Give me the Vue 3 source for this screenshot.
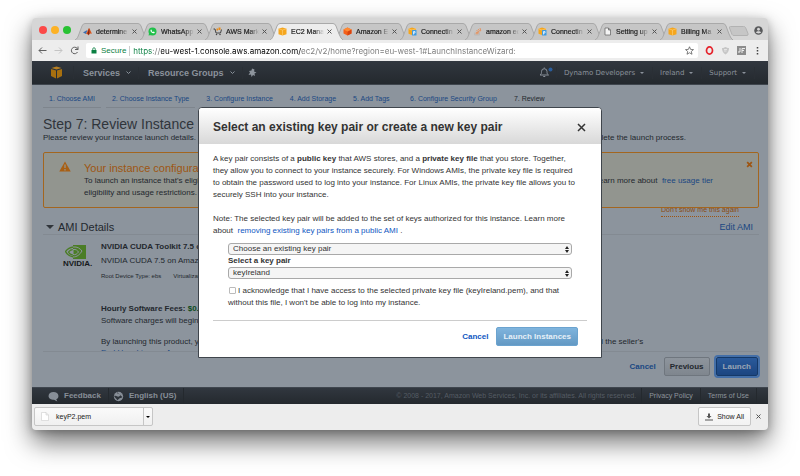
<template>
  <div class="desktop">
    <svg class="sprite" aria-hidden="true">
      <symbol id="i-matlab" viewBox="0 0 18 18">
        <path d="M0 11 5 8l4-2-3 8z" fill="#3c6fb0" />
        <path d="M6 14 12 2c2 2 4 8 6 12-4-2-5 0-7 3-1-3-3-3-5-3z" fill="#d9541a" />
        <path d="M12 2c-1 5-2 9-3 11l3 3c1-4 1-9 0-14z" fill="#7d1f12" />
      </symbol>
      <symbol id="i-whatsapp" viewBox="0 0 18 18">
        <circle cx="9" cy="9" r="8" fill="#20c04a" />
        <path d="m1 17 1.500-5 4 4z" fill="#20c04a" />
        <path d="M5 6c1-2 2-1 3 1L7 8c1 1 2 2 3 2l1-1c2 1 3 1 2 3-3 2-9-2-8-6z" fill="#fff" />
      </symbol>
      <symbol id="i-cart" viewBox="0 0 18 18">
        <path d="M1 4h3l2 8h9l2-7" fill="none" stroke="#444" stroke-width="2" />
        <path d="M7 3h3v4H7zM11 1h4v5h-4z" fill="#e88b1a" />
        <circle cx="7" cy="15" r="1.500" fill="#444" />
        <circle cx="14" cy="15" r="1.500" fill="#444" />
      </symbol>
      <symbol id="i-cube" viewBox="0 0 18 18">
        <path d="m9 1 8 2.500v11L9 17l-8-2.500v-11z" fill="#f5a61d" />
        <path d="m1 3.500 8 2.500 8-2.500M9 6v11" fill="none" stroke="#ffd27d" stroke-width="1.200" />
      </symbol>
      <symbol id="i-cube-red" viewBox="0 0 18 18">
        <path d="m9 1 8 4v8l-8 4-8-4V5z" fill="#f4601a" />
        <path d="m9 9 8-4v8l-8 4z" fill="#d9430c" />
        <path d="m9 1 8 4-8 4-8-4z" fill="#ff8a33" />
      </symbol>
      <symbol id="i-cube-doc" viewBox="0 0 18 18">
        <path d="m8 1 8 2.500v10L8 16l-7-2.500v-10z" fill="#f5a61d" />
        <path d="m1 3.500 7 2.500 8-2.500" fill="none" stroke="#ffd27d" stroke-width="1.200" />
        <rect x="8" y="6" width="9" height="11" rx="1" fill="#3f9be0" />
        <path d="M11 15V9h3v3h-3" fill="none" stroke="#fff" stroke-width="1.500" />
      </symbol>
      <symbol id="i-stack" viewBox="0 0 18 18">
        <path d="M3 11v5h10v-5" fill="none" stroke="#b5b5b5" stroke-width="1.500" />
        <path d="M5 13.500h6M5.500 10.500l6 1M7 7l5.500 3M10 4l4 5M14 2l1.500 6" stroke="#ee8748" stroke-width="1.600" />
      </symbol>
      <symbol id="i-file" viewBox="0 0 18 18">
        <path d="M4 2h7l4 4v10H4zM11 2v4h4" fill="#f4f4f4" stroke="#666" stroke-width="1.500" />
      </symbol>
    </svg>

    <div class="window">
      <div class="tab-strip">
        <div class="lights">
          <button class="light red" aria-label="Close window"></button>
          <button class="light amber" aria-label="Minimize window"></button>
          <button class="light green" aria-label="Zoom window"></button>
        </div>
        <div class="tabs">
          <div v-for="tab in tabs" :key="tab.id" :class="['tab', { active: tab.active }]">
            <svg class="tab-shape" viewBox="0 0 73 17" preserveAspectRatio="none">
              <path d="M0 17C2 16 3 14 4 11L7 3Q8 .5 10 .5H63Q65 .5 66 3L69 11Q71 16 73 17" />
            </svg>
            <svg class="tab-icon"><use :href="`#i-${tab.icon}`" /></svg>
            <span class="tab-title">{{ tab.title }}</span>
            <button class="tab-close" aria-label="Close tab">
              <svg viewBox="0 0 10 10"><path d="m1 1 8 8M9 1 1 9" /></svg>
            </button>
          </div>
        </div>
        <button class="new-tab" aria-label="New tab">
          <svg viewBox="0 0 20 10"><path d="M1.500.5h13q1.500 0 2 1l2.500 6q.5 2-1 2H5q-1.500 0-2-1L.5 2Q0 .5 1.500.5z" /></svg>
        </button>
        <button class="profile" aria-label="Profile">
          <svg viewBox="0 0 18 18">
            <circle cx="9" cy="9" r="8.500" fill="#58595b" />
            <circle cx="9" cy="6.500" r="2.800" fill="#d6d6d6" />
            <path d="M3.500 12.500c2-3 9-3 11 0-2 3-9 3-11 0z" fill="#d6d6d6" />
          </svg>
        </button>
      </div>

      <div class="toolbar">
        <button class="tool" aria-label="Back">
          <svg viewBox="0 0 18 18"><path d="M17 9H2M8 3 2 9l6 6" stroke="#5f5f5f" /></svg>
        </button>
        <button class="tool" aria-label="Forward">
          <svg viewBox="0 0 18 18"><path d="M1 9h15M10 3l6 6-6 6" stroke="#c4c4c4" /></svg>
        </button>
        <button class="tool" aria-label="Reload">
          <svg viewBox="0 0 18 18"><path d="M15 12a6.500 6.500 0 1 1-1-7.500L16 7M16 1v6h-6" stroke="#5f5f5f" /></svg>
        </button>
        <div class="omnibox">
          <svg class="lock" viewBox="0 0 12 14">
            <path d="M1 6h10v7H1z" fill="#0b8043" />
            <path d="M3.500 6V4a2.500 2.500 0 0 1 5 0v2" fill="none" stroke="#0b8043" stroke-width="1.600" />
          </svg>
          <span class="secure">Secure</span>
          <input v-model="url" class="url" type="text" aria-label="Address" spellcheck="false" />
          <svg class="star" viewBox="0 0 18 18">
            <path d="m9 1.500 2.200 5.300 5.800.4-4.400 3.700 1.400 5.600L9 13.500l-5 3 1.400-5.600L1 7.200l5.800-.4z" />
          </svg>
        </div>
        <svg class="ext" viewBox="0 0 18 18">
          <ellipse cx="9" cy="9" rx="6" ry="7.300" fill="none" stroke="#e5232c" stroke-width="3.400" />
        </svg>
        <svg class="ext" viewBox="0 0 18 18">
          <path d="M2 4c3 0 5-1 7-2 2 1 4 2 7 2 0 6-2 10-7 13C4 14 2 10 2 4z" fill="#c6c6c6" />
          <path d="M6 7h6M6 10h5" stroke="#eee" stroke-width="1.500" />
        </svg>
        <svg class="ext" viewBox="0 0 18 18">
          <path d="M0 0h18v18H0z" fill="#8c8c8c" />
          <path d="M6 4v8H2M10 14V5h6M10 9h4" fill="none" stroke="#eee" stroke-width="2" />
        </svg>
        <button class="tool menu" aria-label="Menu">
          <svg viewBox="0 0 18 18">
            <path d="M9 2v3M9 8v3M9 14v3" stroke="#444" stroke-width="3" />
          </svg>
        </button>
      </div>

      <div class="console">
        <nav class="aws-nav">
          <a href="#" class="aws-logo" aria-label="AWS">
            <svg viewBox="0 0 26 26">
              <path d="M2 6 12 9v16L2 20zM24 6 14 9v16l10-5z" fill="#a8700f" />
              <path d="m3 4 10-3 10 3-10 3z" fill="#b98023" />
            </svg>
          </a>
          <a href="#" class="nav-main">Services <svg viewBox="0 0 10 6"><path d="m1 1 4 4 4-4" /></svg></a>
          <a href="#" class="nav-main">Resource Groups <svg viewBox="0 0 10 6"><path d="m1 1 4 4 4-4" /></svg></a>
          <a href="#" class="nav-pin" aria-label="Pinned shortcuts">
            <svg viewBox="0 0 18 18">
              <path d="m8 1 5 2-1 4 5 2-4 2 1 5-4-2-3 4-1-5-5 1 3-5-2-3 5-1z" fill="#8d949c" />
            </svg>
          </a>
          <a href="#" class="nav-bell" aria-label="Alerts">
            <svg viewBox="0 0 28 22">
              <path d="M2 16c3-2 3-4 3-7a5.500 5.500 0 0 1 11 0c0 3 0 5 3 7zM8.500 19h4M10.500 1v2" fill="none" stroke="#8b929b" stroke-width="2" />
              <circle cx="23" cy="5" r="4" fill="#2a5d9c" />
            </svg>
          </a>
          <a v-for="item in account" :key="item" href="#" class="nav-account">{{ item }} <i></i></a>
        </nav>

        <div class="wizard">
          <div class="scroll-area">
            <div class="steps">
              <a v-for="(step, i) in steps" :key="step" href="#" :class="['step', { current: i === 6 }]">
                {{ i + 1 }}. {{ step }}
              </a>
            </div>
            <h1>Step 7: Review Instance Launch</h1>
            <p class="intro">
              <span>Please review your instance launch details. You can go back to edit changes for each section.</span>
              <span>Click <b>Launch</b> to assign a key pair to your instance and complete the launch process.</span>
            </p>

            <div class="alert">
              <svg class="alert-icon" viewBox="0 0 24 22">
                <path d="M12 1 23.500 21H.5z" fill="#a85f14" />
                <path d="M12 7v7M12 16v3" stroke="#959890" stroke-width="2.500" />
              </svg>
              <div class="alert-text">
                <h2>Your instance configuration is not eligible for the free usage tier</h2>
                <p>
                  <span>To launch an instance that's eligible for the free usage tier, check your AMI selection,
                    instance type, configuration options, or storage devices.</span>
                  <span>Learn more about&nbsp; <a href="#">free usage tier</a></span>
                </p>
                <p>eligibility and usage restrictions.</p>
              </div>
              <button class="alert-close" aria-label="Dismiss">
                <svg viewBox="0 0 12 12"><path d="m2 2 8 8M10 2l-8 8" /></svg>
              </button>
            </div>
            <div class="dont-show"><a href="#">Don't show me this again</a></div>

            <div class="section-head">
              <i class="caret"></i>
              <h2>AMI Details</h2>
              <a href="#">Edit AMI</a>
            </div>

            <div class="ami">
              <div class="vendor">
                <svg viewBox="0 0 42 28">
                  <path d="M16 0h26v28H16z" fill="#4b7d26" />
                  <g fill="none" stroke="#4b7d26" stroke-width="2.600">
                    <path d="M17 4C9 5 4 9 1 13c3 6 8 10 16 11" />
                    <path d="M17 9c-5 0-8 2-10 5 2 4 5 6 10 6" />
                  </g>
                  <g fill="none" stroke="#8d949c" stroke-width="2">
                    <path d="M16 4c9-1 14 3 18 8-4 7-10 12-18 12" />
                    <path d="M16 9c6-1 9 2 11 5-3 4-6 6-11 5V9" />
                  </g>
                </svg>
                <span>NVIDIA.</span>
              </div>
              <div class="ami-info">
                <h3>NVIDIA CUDA Toolkit 7.5 on Amazon Linux</h3>
                <p class="ami-desc">NVIDIA CUDA 7.5 on Amazon Linux</p>
                <p class="ami-meta"><span>Root Device Type: ebs</span><span>Virtualization type: hvm</span></p>
                <p class="fees"><b>Hourly Software Fees: <em>$0.00 per hour</em></b></p>
                <p>Software charges will begin once you launch this AMI.</p>
                <p class="terms">
                  <span>By launching this product, you will be subscribed to this software and agree that your</span>
                  <span>use of this software is subject to the pricing terms and the seller's</span>
                </p>
                <p class="license"><a href="#">End User License Agreement</a></p>
              </div>
            </div>
          </div>

          <div class="wizard-actions">
            <a href="#" class="cancel">Cancel</a>
            <button class="previous">Previous</button>
            <button class="launch">Launch</button>
          </div>
        </div>

        <footer class="aws-footer">
          <a href="#" class="foot-main">
            <svg viewBox="0 0 20 20"><path d="M10 2c5 0 9 3 9 7s-2 5-4 6l2 4-6-3C5 16 1 13 1 9s4-7 9-7z" fill="#878e97" /></svg>
            Feedback
          </a>
          <a href="#" class="foot-main">
            <svg viewBox="0 0 20 20">
              <circle cx="10" cy="10" r="8.500" fill="#878e97" />
              <path d="M7 2c0 4 5 3 6 5s-3 4-5 3-4-2-6-1c1 3 4 4 6 8l3-3c1-2 4 0 6-3" fill="#2d333a" />
            </svg>
            English (US)
          </a>
          <span class="copyright">© 2008 - 2017, Amazon Web Services, Inc. or its affiliates. All rights reserved.</span>
          <a href="#" class="foot-link">Privacy Policy</a>
          <a href="#" class="foot-link">Terms of Use</a>
        </footer>

        <div class="overlay">
          <div class="modal" role="dialog" aria-labelledby="modal-title">
            <div class="modal-head">
              <h2 id="modal-title">Select an existing key pair or create a new key pair</h2>
              <button aria-label="Close">
                <svg viewBox="0 0 18 18"><path d="m2 2 14 14M16 2 2 16" /></svg>
              </button>
            </div>
            <div class="modal-body">
              <p>
                A key pair consists of a <b>public key</b> that AWS stores, and a <b>private key file</b> that you store. Together,<br />
                they allow you to connect to your instance securely. For Windows AMIs, the private key file is required<br />
                to obtain the password used to log into your instance. For Linux AMIs, the private key file allows you to<br />
                securely SSH into your instance.
              </p>
              <p>
                Note: The selected key pair will be added to the set of keys authorized for this instance. Learn more<br />
                about&nbsp; <a href="#">removing existing key pairs from a public AMI</a> .
              </p>
              <form class="key-form" @submit.prevent>
                <div class="select">
                  <select v-model="mode" aria-label="Key pair option">
                    <option>Choose an existing key pair</option>
                    <option>Create a new key pair</option>
                    <option>Proceed without a key pair</option>
                  </select>
                  <svg viewBox="0 0 8 14"><path d="m4 0 4 6H0zM4 14l4-6H0z" /></svg>
                </div>
                <label class="field-label" for="key-pair">Select a key pair</label>
                <div class="select">
                  <select id="key-pair" v-model="keyPair">
                    <option>keyIreland</option>
                  </select>
                  <svg viewBox="0 0 8 14"><path d="m4 0 4 6H0zM4 14l4-6H0z" /></svg>
                </div>
                <label class="ack">
                  <input v-model="acknowledged" type="checkbox" />I acknowledge that I have access to the selected private key file (keyIreland.pem), and that<br />
                  without this file, I won't be able to log into my instance.
                </label>
              </form>
            </div>
            <div class="modal-actions">
              <a href="#">Cancel</a>
              <button>Launch Instances</button>
            </div>
          </div>
        </div>
      </div>

      <div class="downloads">
        <div class="download">
          <button class="download-file">
            <svg viewBox="0 0 16 18"><path d="M1 1h9l5 5v11H1zM10 1v5h5" fill="#fff" stroke="#c4c4c4" /></svg>
            keyP2.pem
          </button>
          <button class="download-more" aria-label="Download options"><i></i></button>
        </div>
        <button class="show-all">
          <svg viewBox="0 0 16 16"><path d="M6 1h4v5h3l-5 5-5-5h3zM0 13h16v2H0z" fill="#555" /></svg>
          Show All
        </button>
        <button class="downloads-close" aria-label="Close downloads">
          <svg viewBox="0 0 10 10"><path d="m1 1 8 8M9 1 1 9" /></svg>
        </button>
      </div>
    </div>
  </div>
</template>

<script setup>
import { ref } from 'vue'

const tabs = [
  { id: 1, icon: 'matlab', title: 'determine' },
  { id: 2, icon: 'whatsapp', title: 'WhatsApp' },
  { id: 3, icon: 'cart', title: 'AWS Mark' },
  { id: 4, icon: 'cube', title: 'EC2 Mana', active: true },
  { id: 5, icon: 'cube-red', title: 'Amazon E' },
  { id: 6, icon: 'cube-doc', title: 'Connectin' },
  { id: 7, icon: 'stack', title: 'amazon ec' },
  { id: 8, icon: 'cube-doc', title: 'Connectin' },
  { id: 9, icon: 'file', title: 'Setting up' },
  { id: 10, icon: 'cube', title: 'Billing Ma' }
]

const account = ['Dynamo Developers', 'Ireland', 'Support']

const steps = [
  'Choose AMI',
  'Choose Instance Type',
  'Configure Instance',
  'Add Storage',
  'Add Tags',
  'Configure Security Group',
  'Review'
]

const url = ref('https://eu-west-1.console.aws.amazon.com/ec2/v2/home?region=eu-west-1#LaunchInstanceWizard:')
const mode = ref('Choose an existing key pair')
const keyPair = ref('keyIreland')
const acknowledged = ref(false)
</script>

<style>
body {
  background: #fff;
}
</style>

<style scoped>
* {
  box-sizing: border-box;
}

.desktop {
  padding: 18px 32px 46px;
  font-family: "Liberation Sans", Arial, sans-serif;
  font-size: 8px;
  line-height: 12px;
  overflow: hidden;
}

.sprite {
  position: absolute;
  width: 0;
  height: 0;
}

h1,
h2,
h3,
p {
  margin: 0;
  font-size: inherit;
  font-weight: normal;
}

a {
  text-decoration: none;
}

button {
  padding: 0;
  border: 0;
  background: none;
  font: inherit;
}

svg {
  display: block;
  flex: none;
}

.window {
  border-radius: 4px;
  background: #ededed;
  box-shadow: 0 12px 26px rgba(0, 0, 0, 0.56), 0 2px 8px rgba(0, 0, 0, 0.22);
}

/* tab strip */
.tab-strip {
  display: flex;
  align-items: center;
  padding: 5px 5px 0 7px;
  border-radius: 4px 4px 0 0;
  background: #d6d6d6;
}

.lights {
  display: flex;
  gap: 4px;
  width: 36px;
  padding-bottom: 3px;
}

.light {
  width: 8px;
  height: 8px;
  border-radius: 50%;
}

.red {
  background: #fc4948;
}

.amber {
  background: #fdb225;
}

.green {
  background: #27c232;
}

.tabs {
  display: flex;
  flex: 1;
  min-width: 0;
}

.tab {
  position: relative;
  display: flex;
  flex: 1 1 0;
  align-items: center;
  min-width: 0;
  height: 17px;
  padding: 0 3px 0 8px;
  color: #222;
  font-size: 7px;
}

.tab.active {
  z-index: 1;
}

.tab-shape {
  position: absolute;
  top: 0;
  left: 0;
  width: calc(100% + 8px);
  height: 17px;
  fill: #c6c6c6;
  stroke: #a9a9a9;
}

.active .tab-shape {
  fill: #ededed;
}

.tab-icon {
  position: relative;
  width: 9px;
  height: 9px;
}

.tab-title {
  position: relative;
  flex: 1;
  min-width: 0;
  margin: 0 3px 0 4px;
  overflow: hidden;
  white-space: nowrap;
  -webkit-text-stroke: 0.2px #222;
  mask-image: linear-gradient(to right, #000 70%, transparent);
}

.tab-close {
  position: relative;
}

.tab-close svg,
.downloads-close svg {
  width: 5px;
  height: 5px;
  stroke: #555;
  stroke-width: 2;
}

.new-tab {
  margin-left: 4px;
  padding-bottom: 1px;
}

.new-tab svg {
  width: 20px;
  height: 10px;
  fill: #c6c6c6;
  stroke: #b2b2b2;
}

.profile {
  margin-left: 5px;
  padding-bottom: 3px;
}

.profile svg {
  width: 9px;
  height: 9px;
}

/* toolbar */
.toolbar {
  display: flex;
  align-items: center;
  gap: 7px;
  padding: 3px 6px;
  background: #ededed;
}

.tool svg,
.ext {
  width: 9px;
  height: 9px;
  fill: none;
  stroke-width: 2;
}

.omnibox {
  display: flex;
  flex: 1;
  align-items: center;
  height: 15px;
  padding: 0 4px 0 5px;
  border-radius: 2px;
  background: #fff;
}

.lock {
  width: 6px;
  height: 7px;
}

.secure {
  margin: 0 3px 0 4px;
  padding-right: 3px;
  border-right: 1px solid #ccc;
  color: #0b8043;
  font-size: 8px;
  line-height: 10px;
}

.url {
  flex: 1;
  min-width: 0;
  padding: 0;
  border: 0;
  outline: 0;
  background: linear-gradient(to right, #0b8043 20px, #777 20px 28px, #000 28px 168px, #777 168px);
  background-clip: text;
  -webkit-text-fill-color: transparent;
  font-family: Inter, sans-serif;
  font-size: 8px;
  line-height: 12px;
}

.star {
  width: 9px;
  height: 9px;
  fill: none;
  stroke: #555;
  stroke-width: 1.5;
}

/* AWS console */
.console {
  position: relative;
  background: #8c949d;
  color: #23282e;
}

.aws-nav,
.aws-footer {
  display: flex;
  align-items: center;
  background: linear-gradient(#31373f, #24292e);
}

.aws-nav {
  height: 24px;
  padding: 0 13px 0 18px;
  border-bottom: 1px solid #3f464e;
}

.aws-logo {
  padding-right: 10px;
  border-right: 1px solid #2a2f35;
}

.aws-logo svg {
  width: 13px;
  height: 13px;
}

.nav-main {
  display: flex;
  align-items: center;
  gap: 6px;
  padding: 0 7px 0 9px;
  border-right: 1px solid #2a2f35;
  color: #8b929b;
  font-size: 9px;
  font-weight: bold;
}

.nav-main svg {
  width: 5px;
  height: 3px;
  fill: none;
  stroke: #8b929b;
  stroke-width: 2;
}

.nav-pin {
  margin: 0 auto 0 5px;
}

.nav-pin svg {
  width: 9px;
  height: 9px;
}

.nav-bell {
  padding-right: 3px;
  border-right: 1px solid #2a2f35;
}

.nav-bell svg {
  width: 14px;
  height: 11px;
}

.nav-account {
  display: flex;
  align-items: center;
  gap: 5px;
  padding: 0 8px 0 7px;
  border-right: 1px solid #2a2f35;
  color: #8b929b;
  font-family: "DejaVu Sans", sans-serif;
  font-size: 7px;
}

.nav-account i,
.download-more i {
  border: 2px solid transparent;
  border-top-color: currentColor;
  border-bottom: 0;
}

.wizard {
  padding: 0 9px 0 11px;
}

.scroll-area {
  height: 267px;
  padding-top: 8px;
  overflow: hidden;
  border-bottom: 1px solid #838a92;
}

.scroll-area a,
.cancel {
  color: #1a4782;
}

.steps {
  display: flex;
  gap: 5px;
  font-size: 7px;
}

.scroll-area .step {
  min-width: 52px;
  padding: 0 6px 2px;
  border-bottom: 1px solid #7e858d;
  white-space: nowrap;
}

.scroll-area .step.current {
  border-color: #8a5a1c;
  color: #23282e;
}

h1 {
  padding-top: 9px;
  font-size: 14px;
  line-height: 15px;
  color: #30353b;
}

/* long lines run on behind the dialog */
.intro,
.alert-text p,
.terms {
  display: flex;
  gap: 12px;
  white-space: nowrap;
}

.alert {
  position: relative;
  z-index: 1;
  display: flex;
  align-items: flex-start;
  margin-top: 8px;
  padding: 8px 5px 8px 15px;
  border: 1px solid #a3661f;
  border-radius: 2px;
  background: #92958f;
}

.alert-icon {
  width: 12px;
  height: 11px;
  margin: 0 13px 0 0;
}

.alert-text {
  flex: 1;
  min-width: 0;
  white-space: nowrap;
}

.alert-text h2 {
  color: #9e5512;
  font-size: 11px;
  line-height: 14px;
}

.alert-close svg {
  width: 7px;
  height: 7px;
  stroke: #9e5512;
  stroke-width: 3;
}

.dont-show {
  display: flex;
  justify-content: flex-end;
  margin-top: -4px;
  padding-right: 20px;
}

.scroll-area .dont-show a {
  border-bottom: 1px dotted #9e5512;
  color: #8a4a10;
  font-size: 7px;
}

.section-head {
  display: flex;
  align-items: center;
  padding: 3px 6px 0 3px;
  border-bottom: 1px solid #838a92;
}

.caret {
  margin-right: 4px;
  border: 4px solid transparent;
  border-top-color: #30353b;
  border-bottom: 0;
}

.section-head h2 {
  flex: 1;
  font-size: 11px;
  line-height: 14px;
}

.section-head a {
  font-size: 9px;
}

.ami {
  display: flex;
  padding-top: 6px;
  white-space: nowrap;
}

.vendor {
  width: 38px;
  margin: 4px 0 0 20px;
  color: #16191c;
  font-weight: bold;
  line-height: 9px;
}

.vendor svg {
  width: 21px;
  height: 14px;
  margin-left: 2px;
}

h3 {
  font-size: 8px;
  font-weight: bold;
}

.ami-desc {
  padding-top: 2px;
}

.ami-meta {
  display: flex;
  gap: 12px;
  padding: 3px 0 21px;
  font-size: 6px;
}

.fees em {
  color: #0d4a1a;
  font-style: normal;
}

.terms {
  padding-top: 9px;
}

.license {
  line-height: 9px;
}

.wizard-actions {
  display: flex;
  align-items: center;
  justify-content: flex-end;
  gap: 8px;
  padding: 5px 1px 11px;
  font-weight: bold;
}

.previous,
.launch {
  height: 19px;
  padding: 0 5px;
  border: 1px solid #6f767e;
  border-radius: 2px;
  background: linear-gradient(#8e959d, #7f868e);
  color: #23282e;
  font-weight: bold;
}

.launch {
  margin-left: -2px;
  padding: 0 6px;
  border-color: #153968;
  background: linear-gradient(#2a5a9b, #1c4580);
  color: #9aa6b5;
  box-shadow: 0 0 0 2px #446fa8;
}

.aws-footer {
  height: 17px;
  padding: 0 11px 0 16px;
  border-top: 1px solid #3f464e;
  line-height: 16px;
}

.foot-main {
  display: flex;
  align-items: center;
  gap: 5px;
  padding-right: 7px;
  margin-right: 4px;
  border-right: 1px solid #24292e;
  color: #878e97;
  font-weight: bold;
}

.foot-main svg {
  width: 11px;
  height: 11px;
}

.copyright {
  margin-left: auto;
  padding-right: 5px;
  color: #555c64;
  font-size: 7px;
  white-space: nowrap;
}

.foot-link {
  padding: 0 7px;
  border-left: 1px solid #24292e;
  color: #8d949c;
  font-size: 7px;
}

.foot-link:last-child {
  border-right: 1px solid #24292e;
}

/* key pair dialog */
.overlay {
  position: absolute;
  inset: 0;
  z-index: 2;
  display: flex;
  align-items: flex-start;
  justify-content: center;
  padding-top: 46px;
}

.modal {
  width: 404px;
  border: 1px solid #3f454c;
  border-radius: 4px 4px 0 0;
  background: #fff;
  color: #333;
  white-space: nowrap;
}

.modal-head {
  display: flex;
  align-items: center;
  justify-content: space-between;
  padding: 11px 15px 9px 14px;
  border-radius: 3px 3px 0 0;
  background: linear-gradient(#fff, #d8d8d8);
}

.modal-head h2 {
  font-size: 12px;
  font-weight: bold;
  line-height: 16px;
}

.modal-head svg {
  width: 9px;
  height: 9px;
  stroke: #333;
  stroke-width: 3;
}

.modal-body {
  margin: 0 14px;
  padding: 9px 0 11px;
  border-bottom: 1px solid #ccc;
}

.modal-body p {
  margin-bottom: 12px;
}

.modal-body p + p {
  margin-bottom: 6px;
}

.modal a {
  color: #0f57c2;
}

.key-form {
  padding: 0 15px;
}

.select {
  display: grid;
  align-items: center;
}

.select select,
.select svg {
  grid-area: 1 / 1;
}

.select select {
  appearance: none;
  width: 100%;
  height: 12px;
  padding: 0 4px;
  border: 1px solid #a9a9a9;
  border-radius: 3px;
  background: #f5f5f5;
  color: #333;
  font: inherit;
  line-height: 10px;
}

.select svg {
  justify-self: end;
  width: 4px;
  height: 7px;
  margin-right: 3px;
  fill: #222;
  pointer-events: none;
}

.field-label {
  display: block;
  font-weight: bold;
}

.ack {
  display: block;
  padding-top: 6px;
}

.ack input {
  appearance: none;
  width: 7px;
  height: 7px;
  margin: 0 2px 0 1px;
  border: 1px solid #bbb;
  border-radius: 1px;
  vertical-align: -1px;
}

.modal-actions {
  display: flex;
  align-items: center;
  justify-content: flex-end;
  gap: 8px;
  padding: 6px 23px 11px;
  font-weight: bold;
}

.modal-actions button {
  height: 19px;
  padding: 0 6px;
  border: 1px solid #6ba3cf;
  border-radius: 2px;
  background: linear-gradient(#7fb4dd, #6399c4);
  color: #e6f0f8;
  font-weight: bold;
}

/* downloads shelf */
.downloads {
  display: flex;
  align-items: center;
  padding: 3px 7px 4px 2px;
}

.download {
  display: flex;
  width: 119px;
  height: 19px;
  margin-right: auto;
  border: 1px solid #c6c6c6;
  border-radius: 2px;
  background: linear-gradient(#fafafa, #f0f0f0);
}

.download-file {
  display: flex;
  flex: 1;
  align-items: center;
  gap: 7px;
  padding-left: 6px;
  color: #222;
  font-size: 7px;
}

.download-file svg {
  width: 8px;
  height: 9px;
}

.download-more {
  display: flex;
  align-items: center;
  justify-content: center;
  width: 9px;
  border-left: 1px solid #c6c6c6;
}

.show-all {
  display: flex;
  align-items: center;
  gap: 4px;
  height: 19px;
  margin-right: 5px;
  padding: 0 6px;
  border: 1px solid #c6c6c6;
  border-radius: 2px;
  background: linear-gradient(#fcfcfc, #f2f2f2);
  color: #222;
  font-size: 7px;
}

.show-all svg {
  width: 8px;
  height: 8px;
}
</style>
